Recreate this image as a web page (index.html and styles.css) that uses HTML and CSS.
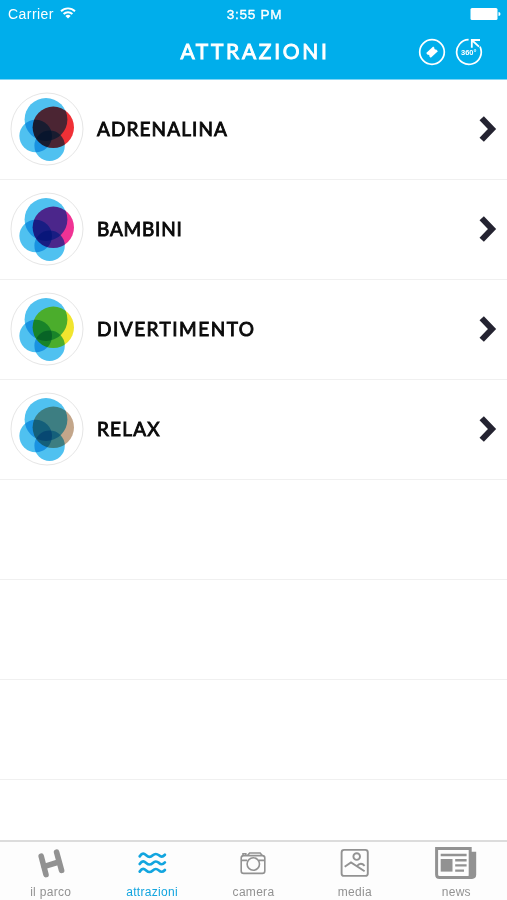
FILE: index.html
```html
<!DOCTYPE html>
<html lang="it">
<head>
<meta charset="utf-8">
<title>Attrazioni</title>
<link rel="stylesheet" href="styles.css">
</head>
<body>
<svg class="defs" width="0" height="0" aria-hidden="true">
  <symbol id="logo" viewBox="0 0 74 74">
    <circle cx="37" cy="37" r="36" fill="#fff" stroke="#e6e6e6"/>
    <g class="petals">
      <circle cx="36" cy="27.5" r="21.4" fill="#4fc1f0"/>
      <circle cx="25.7" cy="44" r="16.3" fill="#4fc1f0"/>
      <circle cx="39.6" cy="53.8" r="15.2" fill="#4fc1f0"/>
      <circle cx="43.3" cy="35.3" r="20.7" fill="currentColor"/>
    </g>
  </symbol>
  <symbol id="chevron" viewBox="0 0 20 28">
    <path d="M3.7 3.2 L14 14 L3.7 24.8" fill="none" stroke="#242331" stroke-width="6"/>
  </symbol>
</svg>
<div class="screen">
  <header class="header">
    <div class="status">
      <div class="carrier"><span>Carrier</span>
        <svg class="wifi" width="16" height="12" viewBox="0 0 16 12"><g fill="none" stroke="#fff" stroke-width="1.9"><path d="M1 4.2a10 10 0 0 1 14 0"/><path d="M3.6 7a6.3 6.3 0 0 1 8.8 0"/></g><path d="M5.4 8.9a3.8 3.8 0 0 1 5.2 0L8 11.6z" fill="#fff"/></svg>
      </div>
      <span class="time">3:55 PM</span>
      <svg class="battery" width="31" height="12" viewBox="0 0 31 12"><rect x=".5" width="27" height="12" rx="1.5" fill="#fff"/><path d="M28.5 4a2 2 0 0 1 0 4z" fill="#fff"/></svg>
    </div>
    <div class="nav">
      <h1>ATTRAZIONI</h1>
      <div class="actions">
        <svg width="28" height="28" viewBox="0 0 28 28"><circle cx="14" cy="14" r="12.3" fill="none" stroke="#fff" stroke-width="1.7"/><path d="M8.2 15l7-6.4 1.2 1.2a1.3 1.3 0 0 0 1.8 1.6l1.7 1.9-7.1 6.5-1.4-1.4a1.3 1.3 0 0 0-1.8-1.6z" fill="#fff"/></svg>
        <svg width="28" height="28" viewBox="0 0 28 28"><path d="M13.6 1.7A12.3 12.3 0 1 0 25 8.6" fill="none" stroke="#fff" stroke-width="1.7"/><path d="M16.8 9.8V2H25M17.3 2.5l6.7 6.2" fill="none" stroke="#fff" stroke-width="1.8"/><text x="13.8" y="16.8" text-anchor="middle" class="deg">360°</text></svg>
      </div>
    </div>
  </header>
  <main class="list">
    <a class="row red"><svg class="logo"><use href="#logo"/></svg><span class="label adrenalina">ADRENALINA</span><svg class="chevron"><use href="#chevron"/></svg></a>
    <a class="row pink"><svg class="logo"><use href="#logo"/></svg><span class="label bambini">BAMBINI</span><svg class="chevron"><use href="#chevron"/></svg></a>
    <a class="row yellow"><svg class="logo"><use href="#logo"/></svg><span class="label divertimento">DIVERTIMENTO</span><svg class="chevron"><use href="#chevron"/></svg></a>
    <a class="row tan"><svg class="logo"><use href="#logo"/></svg><span class="label relax">RELAX</span><svg class="chevron"><use href="#chevron"/></svg></a>
    <div class="row"></div>
    <div class="row"></div>
    <div class="row"></div>
  </main>
  <nav class="tabs">
    <a class="tab"><svg width="44" height="36" viewBox="0 0 44 36"><path d="M12.2 11.2L17 29.6M27.6 7.2L32.6 25.4M14.8 21.6L29.8 17" fill="none" stroke="currentColor" stroke-width="5.6" stroke-linecap="round"/></svg><span>il parco</span></a>
    <a class="tab active"><svg width="44" height="36" viewBox="0 0 44 36"><g fill="none" stroke="currentColor" stroke-width="2.7" stroke-linecap="round"><path id="wave" d="M9.7 11.4C12.4 7.6 14 8.4 16.2 10.3C18.6 12.4 20.2 12.6 22.8 10.3C25.4 8 26.8 8.6 29 10.3C31.1 12.2 32.6 12.2 34.9 9.8"/><use href="#wave" y="7.6"/><use href="#wave" y="15.2"/></g></svg><span>attrazioni</span></a>
    <a class="tab"><svg width="44" height="36" viewBox="0 0 44 36"><g fill="none" stroke="currentColor" stroke-width="1.6"><rect x="10.2" y="10.6" width="23.6" height="17.8" rx="2.5"/><path d="M10 15.4h6.2M28 15.4h6M16.6 10.4l2-2.4h10.6l2 2.4M12 10.4V8.8h2.8v1.6"/><circle cx="22.3" cy="19" r="6.2"/></g></svg><span>camera</span></a>
    <a class="tab"><svg width="44" height="36" viewBox="0 0 44 36"><g fill="none" stroke="currentColor" stroke-width="1.9"><rect x="8.6" y="4.9" width="26.2" height="26" rx="2.5"/><circle cx="23.7" cy="11.6" r="3.3"/><path d="M11.7 21.8L18 17.5L31.6 26.3M23.9 21.1Q27.9 16.6 31.6 20.8"/></g></svg><span>media</span></a>
    <a class="tab"><svg width="44" height="36" viewBox="0 0 44 36"><path d="M2.6 3.4H36.2V32.4H5.6Q2.6 32.4 2.6 29.4z" fill="none" stroke="currentColor" stroke-width="3"/><path d="M36.8 6.8H42.2V29.6Q42.2 33.9 38 33.9H34.6z" fill="currentColor"/><path d="M6.7 10H32.6M21.2 15.2H32.6M21.2 20.4H32.6M21.2 25.6H30" stroke="currentColor" stroke-width="2.4"/><rect x="6.7" y="14" width="11.8" height="12.6" fill="currentColor"/></svg><span>news</span></a>
  </nav>
</div>
</body>
</html>
```
FILE: styles.css
```css
* { box-sizing: border-box; }
body { margin: 0; background: #fff; font-family: "Liberation Sans", Arial, sans-serif; }
.defs { display: block; height: 0; }
.screen { width: 507px; height: 900px; display: flex; flex-direction: column; overflow: hidden; }
.header { height: 80px; flex: none; background: #00aeeb; border-bottom: 1px solid #7ed5f5; color: #fff; }
.status { height: 28px; display: grid; grid-template-columns: 1fr auto 1fr; align-items: center; padding: 0 6px 0 8px; font-size: 14px; }
.carrier { display: flex; align-items: center; gap: 6px; letter-spacing: .45px; }
.wifi { margin-top: -2px; }
.time { font-size: 13.6px; -webkit-text-stroke: .35px #fff; letter-spacing: .7px; }
.battery { justify-self: end; }
.nav { height: 48px; display: grid; grid-template-columns: 1fr auto 1fr; align-items: center; padding-right: 24px; padding-left: 27px; }
h1 { grid-column: 2; margin: -2px 0 0; font: 400 21px/28px Lato, sans-serif; letter-spacing: 2.7px; -webkit-text-stroke: .9px #fff; }
.actions { justify-self: end; display: flex; gap: 9px; }
.actions svg { display: block; }
.deg { font: 700 7.5px "Liberation Sans", sans-serif; fill: #fff; }
.list { flex: 1; min-height: 0; overflow: hidden; }
.row { height: 100px; display: flex; align-items: center; padding: 0 9px 1px 10px; border-bottom: 1px solid #f0f0f0; }
.red { color: #f03036; }
.pink { color: #f03294; }
.yellow { color: #f1e52e; }
.tan { color: #c3a68a; }
.logo { width: 74px; height: 74px; flex: none; }
.petals { isolation: isolate; }
.petals circle { mix-blend-mode: multiply; }
.label { margin-left: 13px; color: #0a0a0a; font: 400 19px/24px Lato, sans-serif; -webkit-text-stroke: .9px #0a0a0a; }
.adrenalina { letter-spacing: 1.1px; }
.bambini { letter-spacing: .8px; }
.divertimento { letter-spacing: 1.5px; }
.relax { letter-spacing: 1.2px; }
.chevron { width: 20px; height: 28px; margin-left: auto; }
.tabs { height: 60px; flex: none; display: grid; grid-template-columns: repeat(5, 1fr); border-top: 2px solid #dcdcdc; background: #fdfdfd; }
.tab { display: flex; flex-direction: column; align-items: center; color: #929292; padding-top: 3px; font-size: 12px; line-height: 14px; letter-spacing: .3px; }
.tab span { margin-top: 4px; }
.active { color: #12a5df; }
```
